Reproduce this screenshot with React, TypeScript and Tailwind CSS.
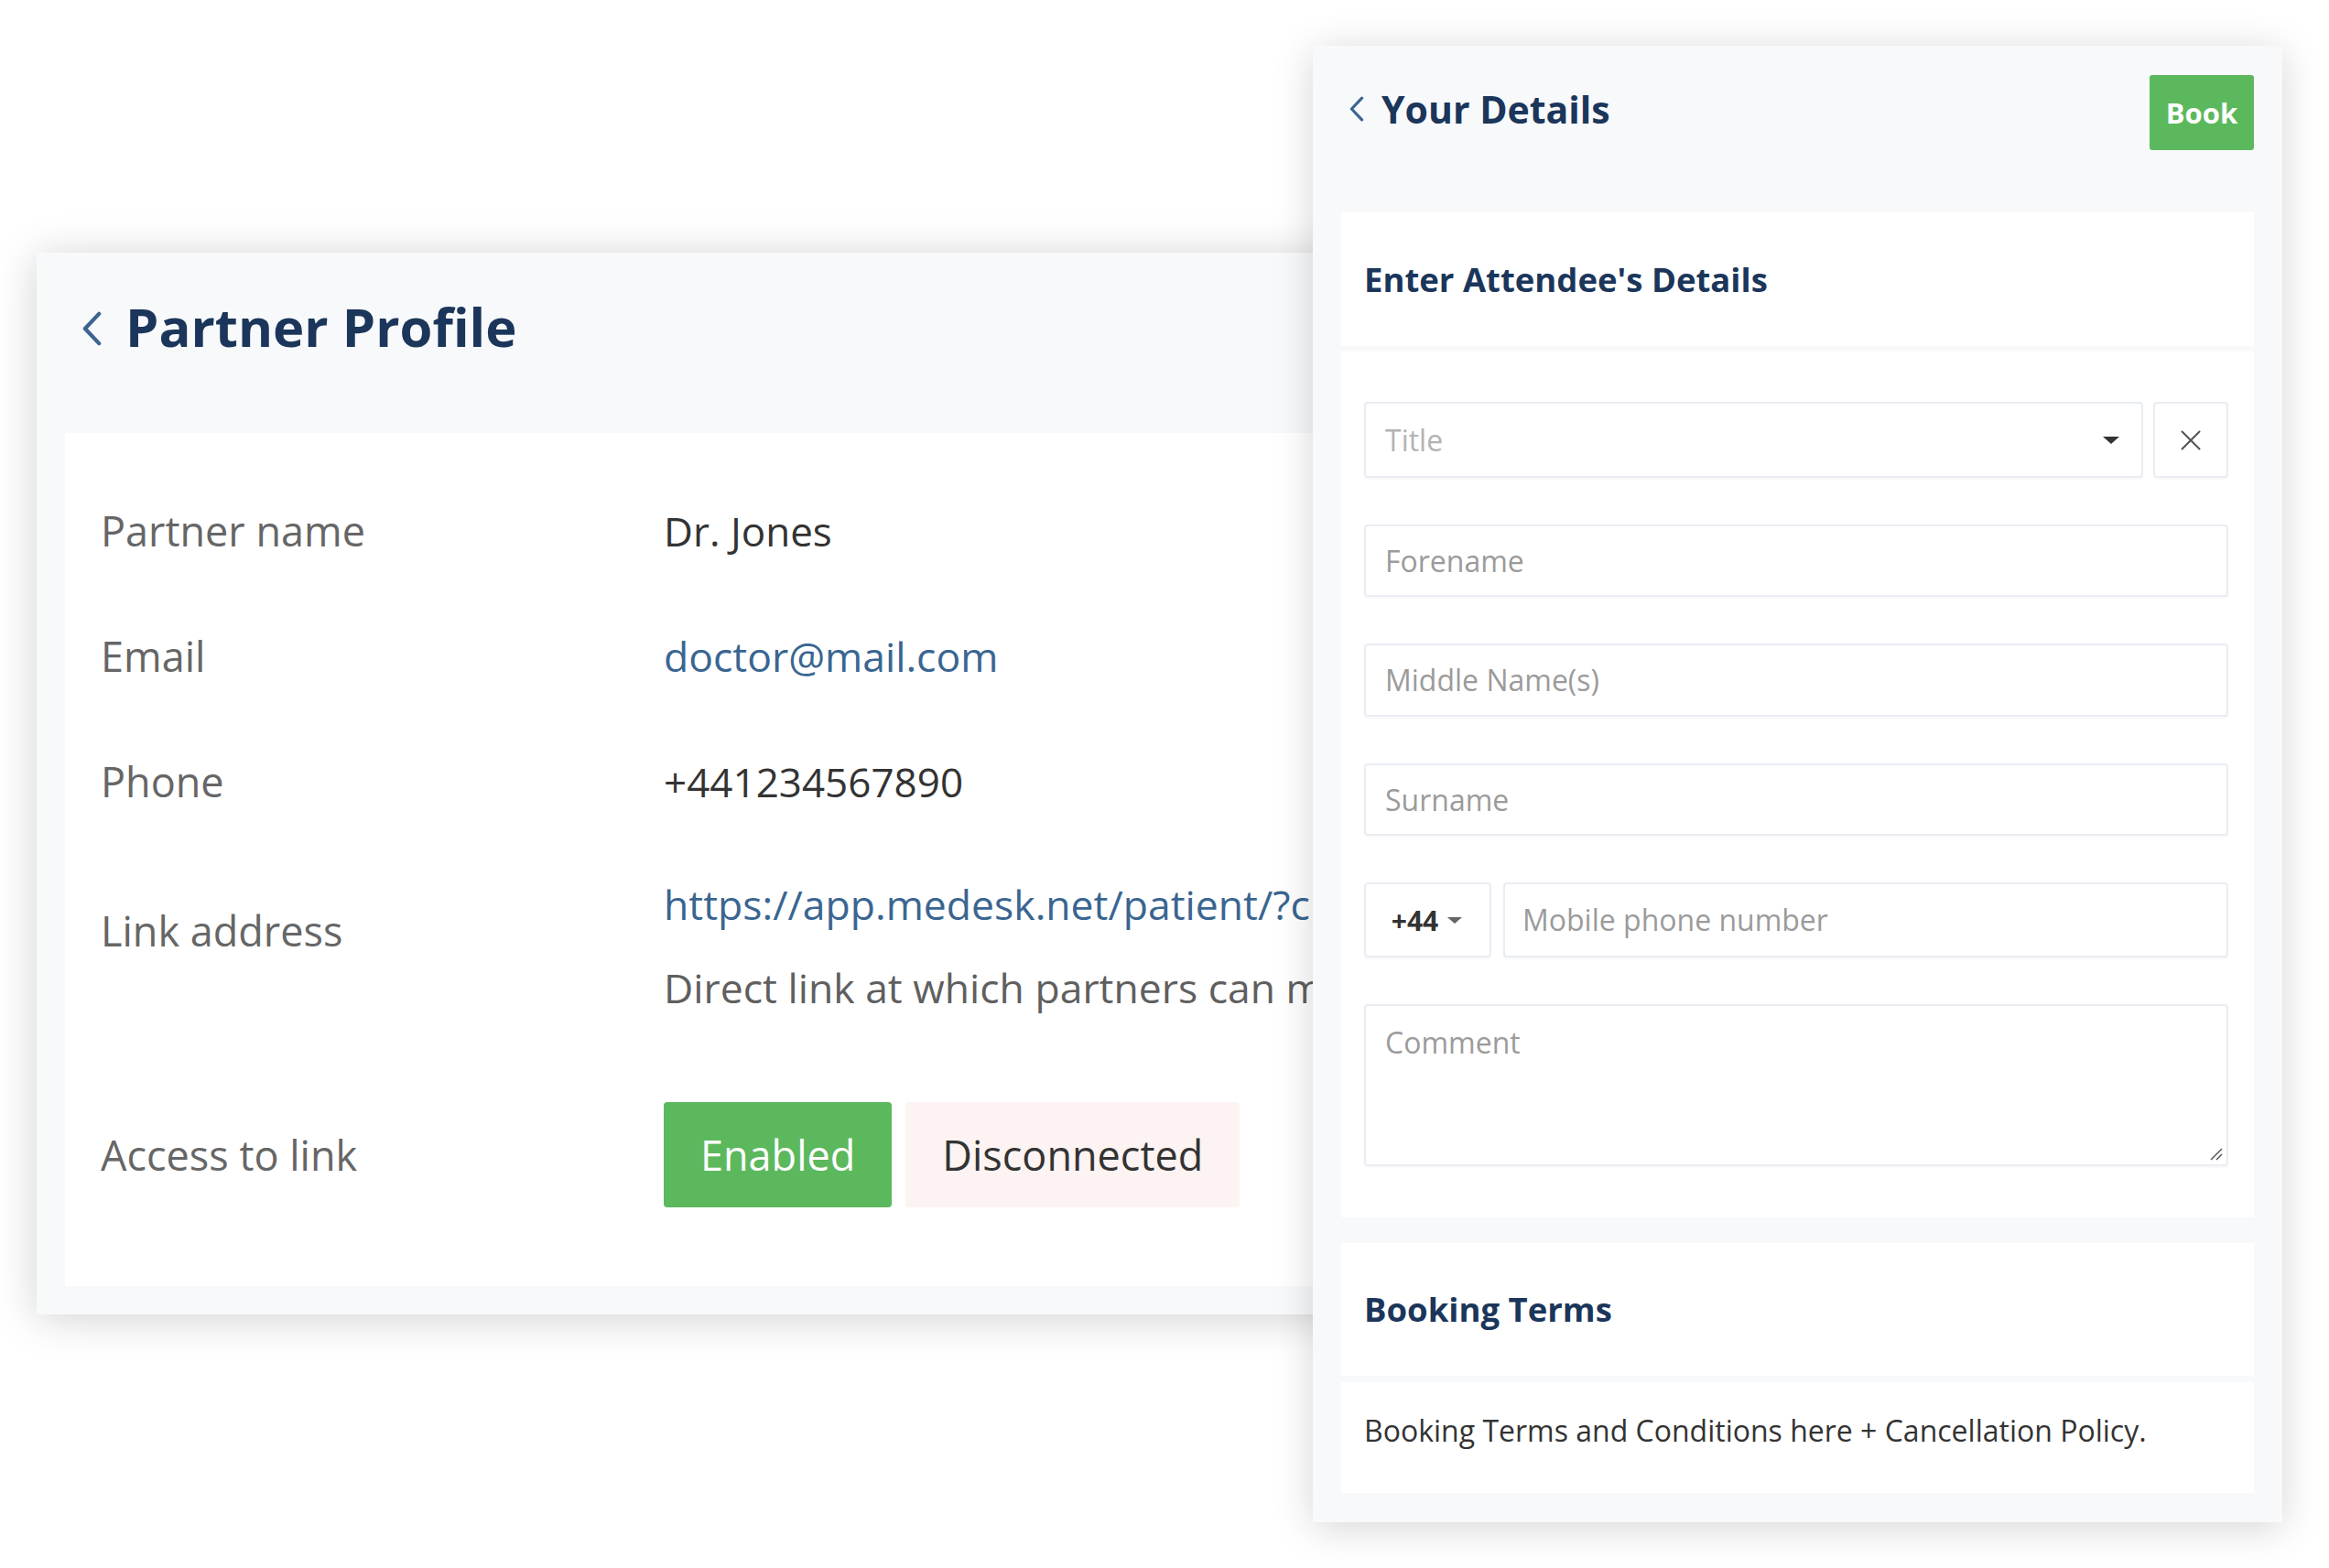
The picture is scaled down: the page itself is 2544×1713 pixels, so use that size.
import { X } from 'lucide-react';

const BackChevron = ({ className }: { className?: string }) => (
  <svg className={className} viewBox="0 0 24 40" fill="none">
    <polyline points="20,3 4,20 20,37" stroke="#3d6491" strokeWidth="4.5" strokeLinecap="round" strokeLinejoin="round" />
  </svg>
);

const Caret = ({ className }: { className?: string }) => (
  <svg className={className} viewBox="0 0 20 10">
    <polygon points="1,1 19,1 10,9" fill="currentColor" />
  </svg>
);

const rows = [
  { label: 'Partner name', value: 'Dr. Jones', link: false },
  { label: 'Email', value: 'doctor@mail.com', link: true },
  { label: 'Phone', value: '+441234567890', link: false },
];

const Field = ({ placeholder, h }: { placeholder: string; h: string }) => (
  <div className={`${h} flex items-center rounded-[4px] border-2 border-[#e9edf3] bg-white pl-[21px] text-[32px] text-[#9b9b9b] shadow-[0_2px_0_rgba(0,0,0,0.025)]`}>
    {placeholder}
  </div>
);

// the right panel covers this card from x=1434, so its content stops there
const PartnerProfile = () => (
  <div className="absolute left-[40px] top-[276px] flex h-[1160px] w-[1460px] flex-col bg-[#f8f9fb] shadow-[0_4px_44px_rgba(0,0,0,0.18)]">
    <div className="flex h-[197px] items-start gap-[25px] pl-[49px] pt-[46px]">
      <BackChevron className="mt-[18px] h-[38px] w-[23px] shrink-0" />
      <h1 className="text-[58px] font-bold leading-[70px] text-[#1b365a]">Partner Profile</h1>
    </div>
    <div className="mx-[31px] flex h-[932px] flex-col bg-white pl-[39px] pt-[38px] text-[45px] leading-[60px]">
      {rows.map((r) => (
        <div key={r.label} className="flex h-[137px] items-center">
          <div className="w-[615px] shrink-0 text-[#666]">{r.label}</div>
          <div className={r.link ? 'text-[44.5px] text-[#3a6591]' : 'text-[44px] text-[#333]'}>{r.value}</div>
        </div>
      ))}
      <div className="flex items-start">
        <div className="w-[615px] shrink-0 pt-[65px] text-[#666]">Link address</div>
        <div className="flex w-[709px] flex-col gap-[31px] overflow-hidden whitespace-nowrap pt-[36px] text-[44.5px]">
          <div className="overflow-hidden text-[#3a6591]">https://app.medesk.net/patient/?c</div>
          <div className="overflow-hidden text-[#5f5f5f]">Direct link at which partners can m</div>
        </div>
      </div>
      <div className="mt-[95px] flex items-center">
        <div className="w-[615px] shrink-0 text-[#666]">Access to link</div>
        <div className="flex gap-[15px]">
          <button className="h-[115px] rounded-[4px] bg-[#5cb85c] px-[40px] text-white">Enabled</button>
          <button className="h-[115px] rounded-[4px] bg-[#fcf3f2] px-[40px] text-[#333]">Disconnected</button>
        </div>
      </div>
    </div>
  </div>
);

const YourDetails = () => (
  <div className="absolute left-[1434px] top-[50px] flex h-[1613px] w-[1059px] flex-col bg-[#f8f9fb] shadow-[0_6px_40px_rgba(0,0,0,0.17)]">
    <div className="flex h-[182px] items-start justify-between pl-[39px] pr-[31px] pt-[32px]">
      <div className="mt-[11px] flex items-center gap-[18px]">
        <BackChevron className="h-[28px] w-[18px]" />
        <h2 className="text-[41px] font-bold leading-[52px] text-[#1b365a]">Your Details</h2>
      </div>
      <button className="h-[82px] w-[114px] rounded-[3px] bg-[#5cb85c] text-[31px] font-bold text-white">Book</button>
    </div>

    <div className="mx-[31px] flex h-[146px] items-center bg-white pl-[25px]">
      <h3 className="text-[36.5px] font-bold text-[#1b365a]">Enter Attendee's Details</h3>
    </div>

    <div className="mx-[31px] mt-[6px] flex h-[946px] flex-col gap-[51px] bg-white pl-[25px] pr-[28px] pt-[55px]">
      <div className="flex h-[83px] gap-[11px]">
        <div className="flex flex-1 items-center justify-between rounded-[4px] border-2 border-[#e9edf3] pl-[21px] pr-[23px] text-[32px] text-[#b3b3b3] shadow-[0_2px_0_rgba(0,0,0,0.025)]">
          <span>Title</span>
          <Caret className="h-[10px] w-[20px] text-[#333]" />
        </div>
        <div className="flex w-[82px] items-center justify-center rounded-[4px] border-2 border-[#e9edf3] text-[#555] shadow-[0_2px_0_rgba(0,0,0,0.025)]">
          <X size={38} strokeWidth={1.3} />
        </div>
      </div>
      <Field placeholder="Forename" h="h-[79px]" />
      <Field placeholder="Middle Name(s)" h="h-[80px]" />
      <Field placeholder="Surname" h="h-[79px]" />
      <div className="flex h-[82px] gap-[13px]">
        <div className="flex w-[139px] items-center justify-center gap-[8px] rounded-[4px] border-2 border-[#e9edf3] text-[30px] font-bold text-[#333] shadow-[0_2px_0_rgba(0,0,0,0.025)]">
          <span>+44</span>
          <Caret className="h-[9px] w-[20px] text-[#666]" />
        </div>
        <div className="flex flex-1 items-center rounded-[4px] border-2 border-[#e9edf3] pl-[19px] text-[32px] text-[#9b9b9b] shadow-[0_2px_0_rgba(0,0,0,0.025)]">
          Mobile phone number
        </div>
      </div>
      <div className="relative h-[177px] rounded-[4px] border-2 border-[#e9edf3] pl-[21px] pt-[19px] text-[32px] leading-[42px] text-[#9b9b9b] shadow-[0_2px_0_rgba(0,0,0,0.025)]">
        Comment
        <svg className="absolute bottom-[4px] right-[4px] h-[16px] w-[16px]" viewBox="0 0 16 16">
          <line x1="15" y1="3" x2="3" y2="15" stroke="#555" strokeWidth="1.4" />
          <line x1="15" y1="9" x2="9" y2="15" stroke="#555" strokeWidth="1.4" />
        </svg>
      </div>
    </div>

    <div className="mx-[31px] mt-[28px] flex h-[145px] items-center bg-white pl-[25px]">
      <h3 className="text-[36.5px] font-bold text-[#1b365a]">Booking Terms</h3>
    </div>

    <div className="mx-[31px] mt-[7px] h-[121px] bg-white pl-[25px] pt-[32px] text-[32px] leading-[42px] text-[#333]">
      Booking Terms and Conditions here + Cancellation Policy.
    </div>
  </div>
);

export default function App() {
  return (
    <div className="relative h-[1713px] w-[2544px] overflow-hidden bg-white font-['Open_Sans',sans-serif]">
      <PartnerProfile />
      <YourDetails />
    </div>
  );
}
